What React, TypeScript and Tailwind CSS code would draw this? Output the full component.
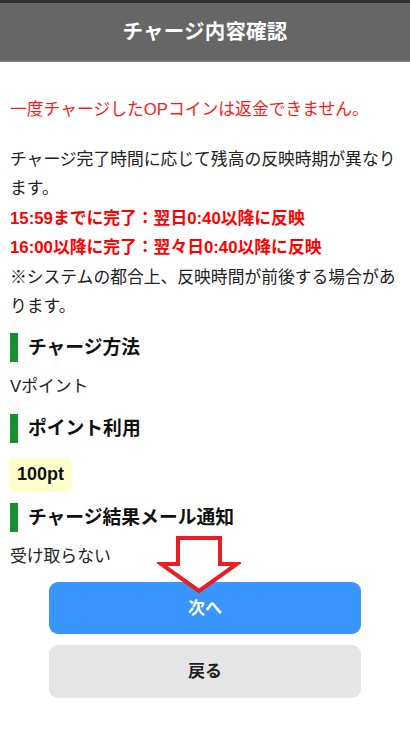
import React from "react";

const font = { fontFamily: '"Liberation Sans", "Noto Sans CJK JP", sans-serif' };

function Heading({ children }: { children: React.ReactNode }) {
  return (
    <div className="flex items-center h-[29px]">
      <div className="w-[8px] h-[29px] bg-[#17912f]" />
      <div className="pl-[10px] text-[18.8px] font-bold text-[#111] leading-[29px]">{children}</div>
    </div>
  );
}

export default function App() {
  return (
    <div className="w-[410px] min-h-[732px] bg-white text-[#222]" style={font}>
      <div className="h-[62px] bg-[#666] border-t-[3px] border-[#333] border-b border-b-[#8a8a8a] flex items-center justify-center">
        <h1 className="text-white font-bold text-[20.5px] tracking-[0.2px]">チャージ内容確認</h1>
      </div>
      <div className="px-[10px] text-[16.8px] leading-[29.4px]">
        <p className="mt-[33px] text-[#ff1a1a]">一度チャージしたOPコインは返金できません。</p>
        <div className="mt-[20.6px]">
          <p>チャージ完了時間に応じて残高の反映時期が異なります。</p>
          <p className="text-[#ff0000] font-bold">15:59までに完了：翌日0:40以降に反映</p>
          <p className="text-[#ff0000] font-bold">16:00以降に完了：翌々日0:40以降に反映</p>
          <p>※システムの都合上、反映時間が前後する場合があります。</p>
        </div>
        <div className="mt-[12px]">
          <Heading>チャージ方法</Heading>
        </div>
        <p className="mt-[10px]">Vポイント</p>
        <div className="mt-[12px]">
          <Heading>ポイント利用</Heading>
        </div>
        <div className="mt-[15px] -ml-[1px] inline-flex items-center h-[34px] px-[8px] bg-[#ffffcc] rounded-[5px] text-[18px] font-bold text-[#111]">
          100pt
        </div>
        <div className="mt-[11px]">
          <Heading>チャージ結果メール通知</Heading>
        </div>
        <p className="mt-[10px]">受け取らない</p>
      </div>
      <div className="relative mt-[11px] flex flex-col items-center gap-[11px]">
        <button className="w-[312px] h-[52px] rounded-[9px] bg-[#3a96ff] text-white font-bold text-[17px]">
          次へ
        </button>
        <button className="w-[312px] h-[53px] rounded-[9px] bg-[#e5e5e5] text-[#222] font-bold text-[17px]">
          戻る
        </button>
        <svg
          className="absolute left-[157px] top-[-49px]"
          width="84"
          height="64"
          viewBox="0 0 84 64"
        >
          <polygon
            points="21,5 63,5 63,31 80,31 42,58 4,31 21,31"
            fill="white"
            stroke="#ec1c24"
            strokeWidth="4"
            strokeLinejoin="miter"
          />
        </svg>
      </div>
    </div>
  );
}
